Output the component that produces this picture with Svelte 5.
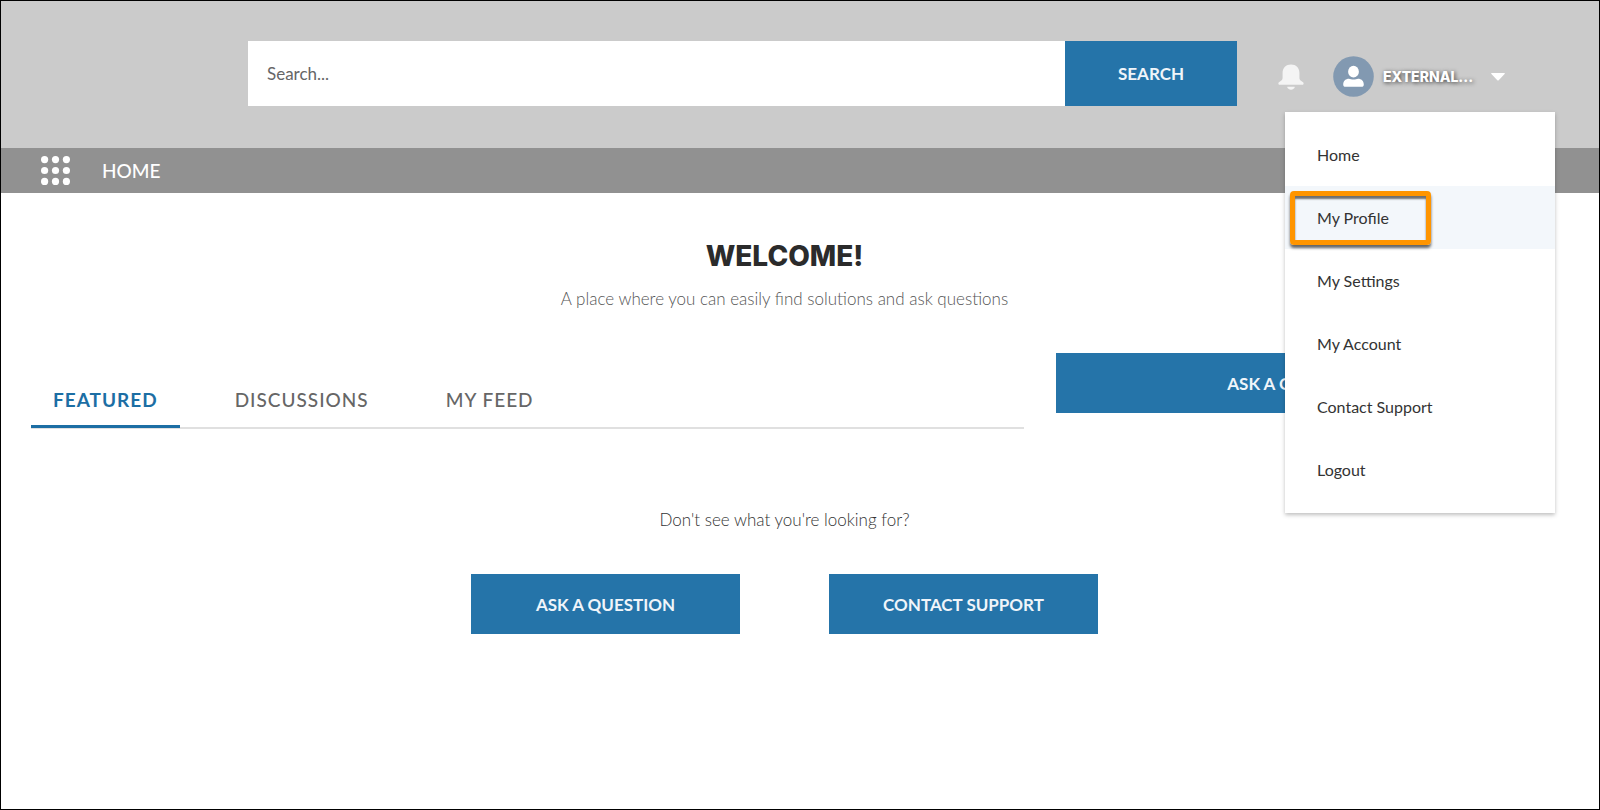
<script>
  // Variables
  let query = "";
  let menuOpen = true;
  let activeTab = "Featured";

  const tabs = ["Featured", "Discussions", "My Feed"];
  const menuItems = [
    "Home",
    "My Profile",
    "My Settings",
    "My Account",
    "Contact Support",
    "Logout"
  ];
  const current = "My Profile";

  // Events
  const toggleMenu = () => {
    menuOpen = !menuOpen;
  };
</script>

<style>
  :global(body) {
    background: white;
  }

  .page {
    box-sizing: border-box;
    min-height: 100vh;
    border: 1px solid black;
    font-family: Lato, "Open Sans", sans-serif;
    font-size: 17px;
    color: #333;
  }

  a {
    color: inherit;
    text-decoration: none;
  }

  button,
  input {
    margin: 0;
    border: none;
    font: inherit;
  }

  button {
    padding: 0;
    background: none;
    cursor: pointer;
  }

  header {
    box-sizing: border-box;
    display: flex;
    align-items: center;
    height: 147px;
    padding-bottom: 2px;
    background: #cbcbcb;
  }

  .search {
    display: flex;
    flex: 1;
    height: 65px;
    margin-left: 247px;
  }

  .search input {
    flex: 1;
    min-width: 0;
    padding: 0 19px;
    background: white;
    color: #333;
  }

  .search input::placeholder {
    color: #666;
    opacity: 1;
  }

  .search button {
    width: 172px;
  }

  .primary {
    background: #2574a9;
    color: #f0f5fa;
    text-transform: uppercase;
    font-weight: 700;
  }

  .user {
    position: relative;
    display: flex;
    align-items: center;
    width: 321px;
    margin-left: 41px;
    padding-top: 6px;
  }

  .bell,
  .bell svg,
  .account svg {
    display: block;
  }

  .account {
    display: flex;
    align-items: center;
    margin-left: 29px;
    color: white;
  }

  .name {
    margin-left: 9px;
    font-family: Inter, sans-serif;
    font-size: 14px;
    font-weight: 800;
    text-shadow: 1px 1px 4px rgba(0, 0, 0, 0.75);
  }

  .caret {
    margin-left: 18px;
  }

  .menu {
    position: absolute;
    top: 62px;
    left: 7px;
    z-index: 10;
    width: 270px;
    margin: 0;
    padding: 11px 0 12px;
    list-style: none;
    background: white;
    box-shadow: 0 2px 4px rgba(0, 0, 0, 0.25);
    font-size: 16px;
  }

  .menu li {
    position: relative;
  }

  .menu a {
    display: block;
    padding: 0 32px;
    line-height: 63px;
  }

  .menu .current {
    background: #f3f7fb;
  }

  .marker {
    position: absolute;
    top: 5px;
    left: 5px;
    box-sizing: border-box;
    width: 141px;
    height: 54px;
    border: 5px solid #ff9500;
    border-radius: 4px;
    box-shadow: 0 3px 3px rgba(0, 0, 0, 0.6), inset 0 3px 2px rgba(0, 0, 0, 0.55);
    pointer-events: none;
  }

  nav {
    display: flex;
    align-items: center;
    height: 45px;
    padding-left: 40px;
    background: #919191;
    color: white;
    font-size: 19px;
    font-weight: 500;
  }

  nav svg {
    display: block;
    margin-right: 32px;
  }

  main {
    padding: 45px 61px 0 30px;
  }

  h1 {
    margin: 0;
    font-family: Inter, sans-serif;
    font-size: 28px;
    font-weight: 800;
    line-height: 36px;
    text-align: center;
    color: #2b2b2b;
  }

  .tagline {
    margin: 13px 0 0;
    line-height: 24px;
    font-weight: 300;
    text-align: center;
    color: #555;
  }

  .columns {
    display: grid;
    grid-template-columns: 1fr 32%;
    align-items: start;
    gap: 32px;
    margin-top: 42px;
  }

  .tabs {
    display: flex;
    gap: 33px;
    margin-top: 18px;
    border-bottom: 2px solid #e0e0e0;
  }

  .tabs button {
    margin-bottom: -1px;
    padding: 3px 22px 0;
    border-bottom: 3px solid transparent;
    line-height: 51px;
    font-size: 19px;
    font-weight: 500;
    letter-spacing: 1px;
    text-transform: uppercase;
    color: #666;
  }

  .tabs .active {
    border-color: #1c6ea4;
    font-weight: 700;
    color: #1c6ea4;
  }

  .columns .primary,
  .actions .primary {
    height: 60px;
  }

  .prompt {
    margin: 79px 0 0;
    line-height: 24px;
    font-weight: 300;
    text-align: center;
  }

  .actions {
    display: flex;
    justify-content: center;
    gap: 89px;
    margin-top: 42px;
  }

  .actions .primary {
    width: 269px;
  }
</style>

<div class="page">
  <header>
    <form class="search" on:submit|preventDefault>
      <input type="text" placeholder="Search..." aria-label="Search" bind:value={query} />
      <button class="primary">Search</button>
    </form>

    <div class="user">
      <button class="bell" aria-label="Notifications">
        <svg width="26" height="26" viewBox="0 0 26 26" fill="#f4f4f4">
          <path d="M13 0.5C8 0.5 4.6 4 4.6 8.6v5.2c0 2-1 3-2.6 3.7C1 18 .4 18.600 .4 19.500c0 .8.5 1.300 1.300 1.300h22.600c.8 0 1.300-.5 1.300-1.300 0-.9-.6-1.500-1.600-2-1.600-.7-2.600-1.700-2.600-3.700V8.600C21.400 4 18 .5 13 .5z" />
          <path d="M9.500 22.700h7c.4 0 .5.300.3.600-.7 1.500-2.100 2.400-3.800 2.400s-3.100-.9-3.800-2.400c-.2-.3-.1-.6.300-.6z" />
        </svg>
      </button>

      <button class="account" aria-expanded={menuOpen} on:click={toggleMenu}>
        <svg width="41" height="41" viewBox="0 0 41 41">
          <circle cx="20.500" cy="20.500" r="20.300" fill="#8299b1" />
          <ellipse cx="20.500" cy="15.700" rx="5.400" ry="5.900" fill="white" />
          <path d="M10.200 28.500c0-3.600 2.700-5.700 5.700-5.700 1.500 0 2.600.8 4.600.8s3.100-.8 4.600-.8c3 0 5.700 2.100 5.700 5.700 0 1.500-.8 2.300-2.200 2.300H12.400c-1.400 0-2.200-.8-2.200-2.300z" fill="white" />
        </svg>
        <span class="name">EXTERNAL...</span>
        <svg class="caret" width="14" height="8" viewBox="0 0 14 8" fill="white">
          <path d="M.8 0h12.400c.7 0 .8.500.4.900L7.700 7.200c-.5.500-.9.500-1.400 0L.4.900C0 .5.100 0 .8 0z" />
        </svg>
      </button>

      {#if menuOpen}
        <ul class="menu">
          {#each menuItems as item}
            <li class:current={item === current}>
              <a href="#top">{item}</a>
              {#if item === current}
                <span class="marker"></span>
              {/if}
            </li>
          {/each}
        </ul>
      {/if}
    </div>
  </header>

  <nav>
    <svg width="29" height="29" viewBox="0 0 29 29" fill="white">
      {#each [3.6, 14.5, 25.4] as cy}
        {#each [3.6, 14.5, 25.4] as cx}
          <circle {cx} {cy} r="3.600" />
        {/each}
      {/each}
    </svg>
    <a href="#top">HOME</a>
  </nav>

  <main>
    <h1>WELCOME!</h1>
    <p class="tagline">A place where you can easily find solutions and ask questions</p>

    <div class="columns">
      <div class="tabs" role="tablist">
        {#each tabs as tab}
          <button
            role="tab"
            aria-selected={tab === activeTab}
            class:active={tab === activeTab}
            on:click={() => (activeTab = tab)}>{tab}</button>
        {/each}
      </div>
      <button class="primary">Ask a question</button>
    </div>

    <p class="prompt">Don't see what you're looking for?</p>
    <div class="actions">
      <button class="primary">Ask a question</button>
      <button class="primary">Contact support</button>
    </div>
  </main>
</div>
